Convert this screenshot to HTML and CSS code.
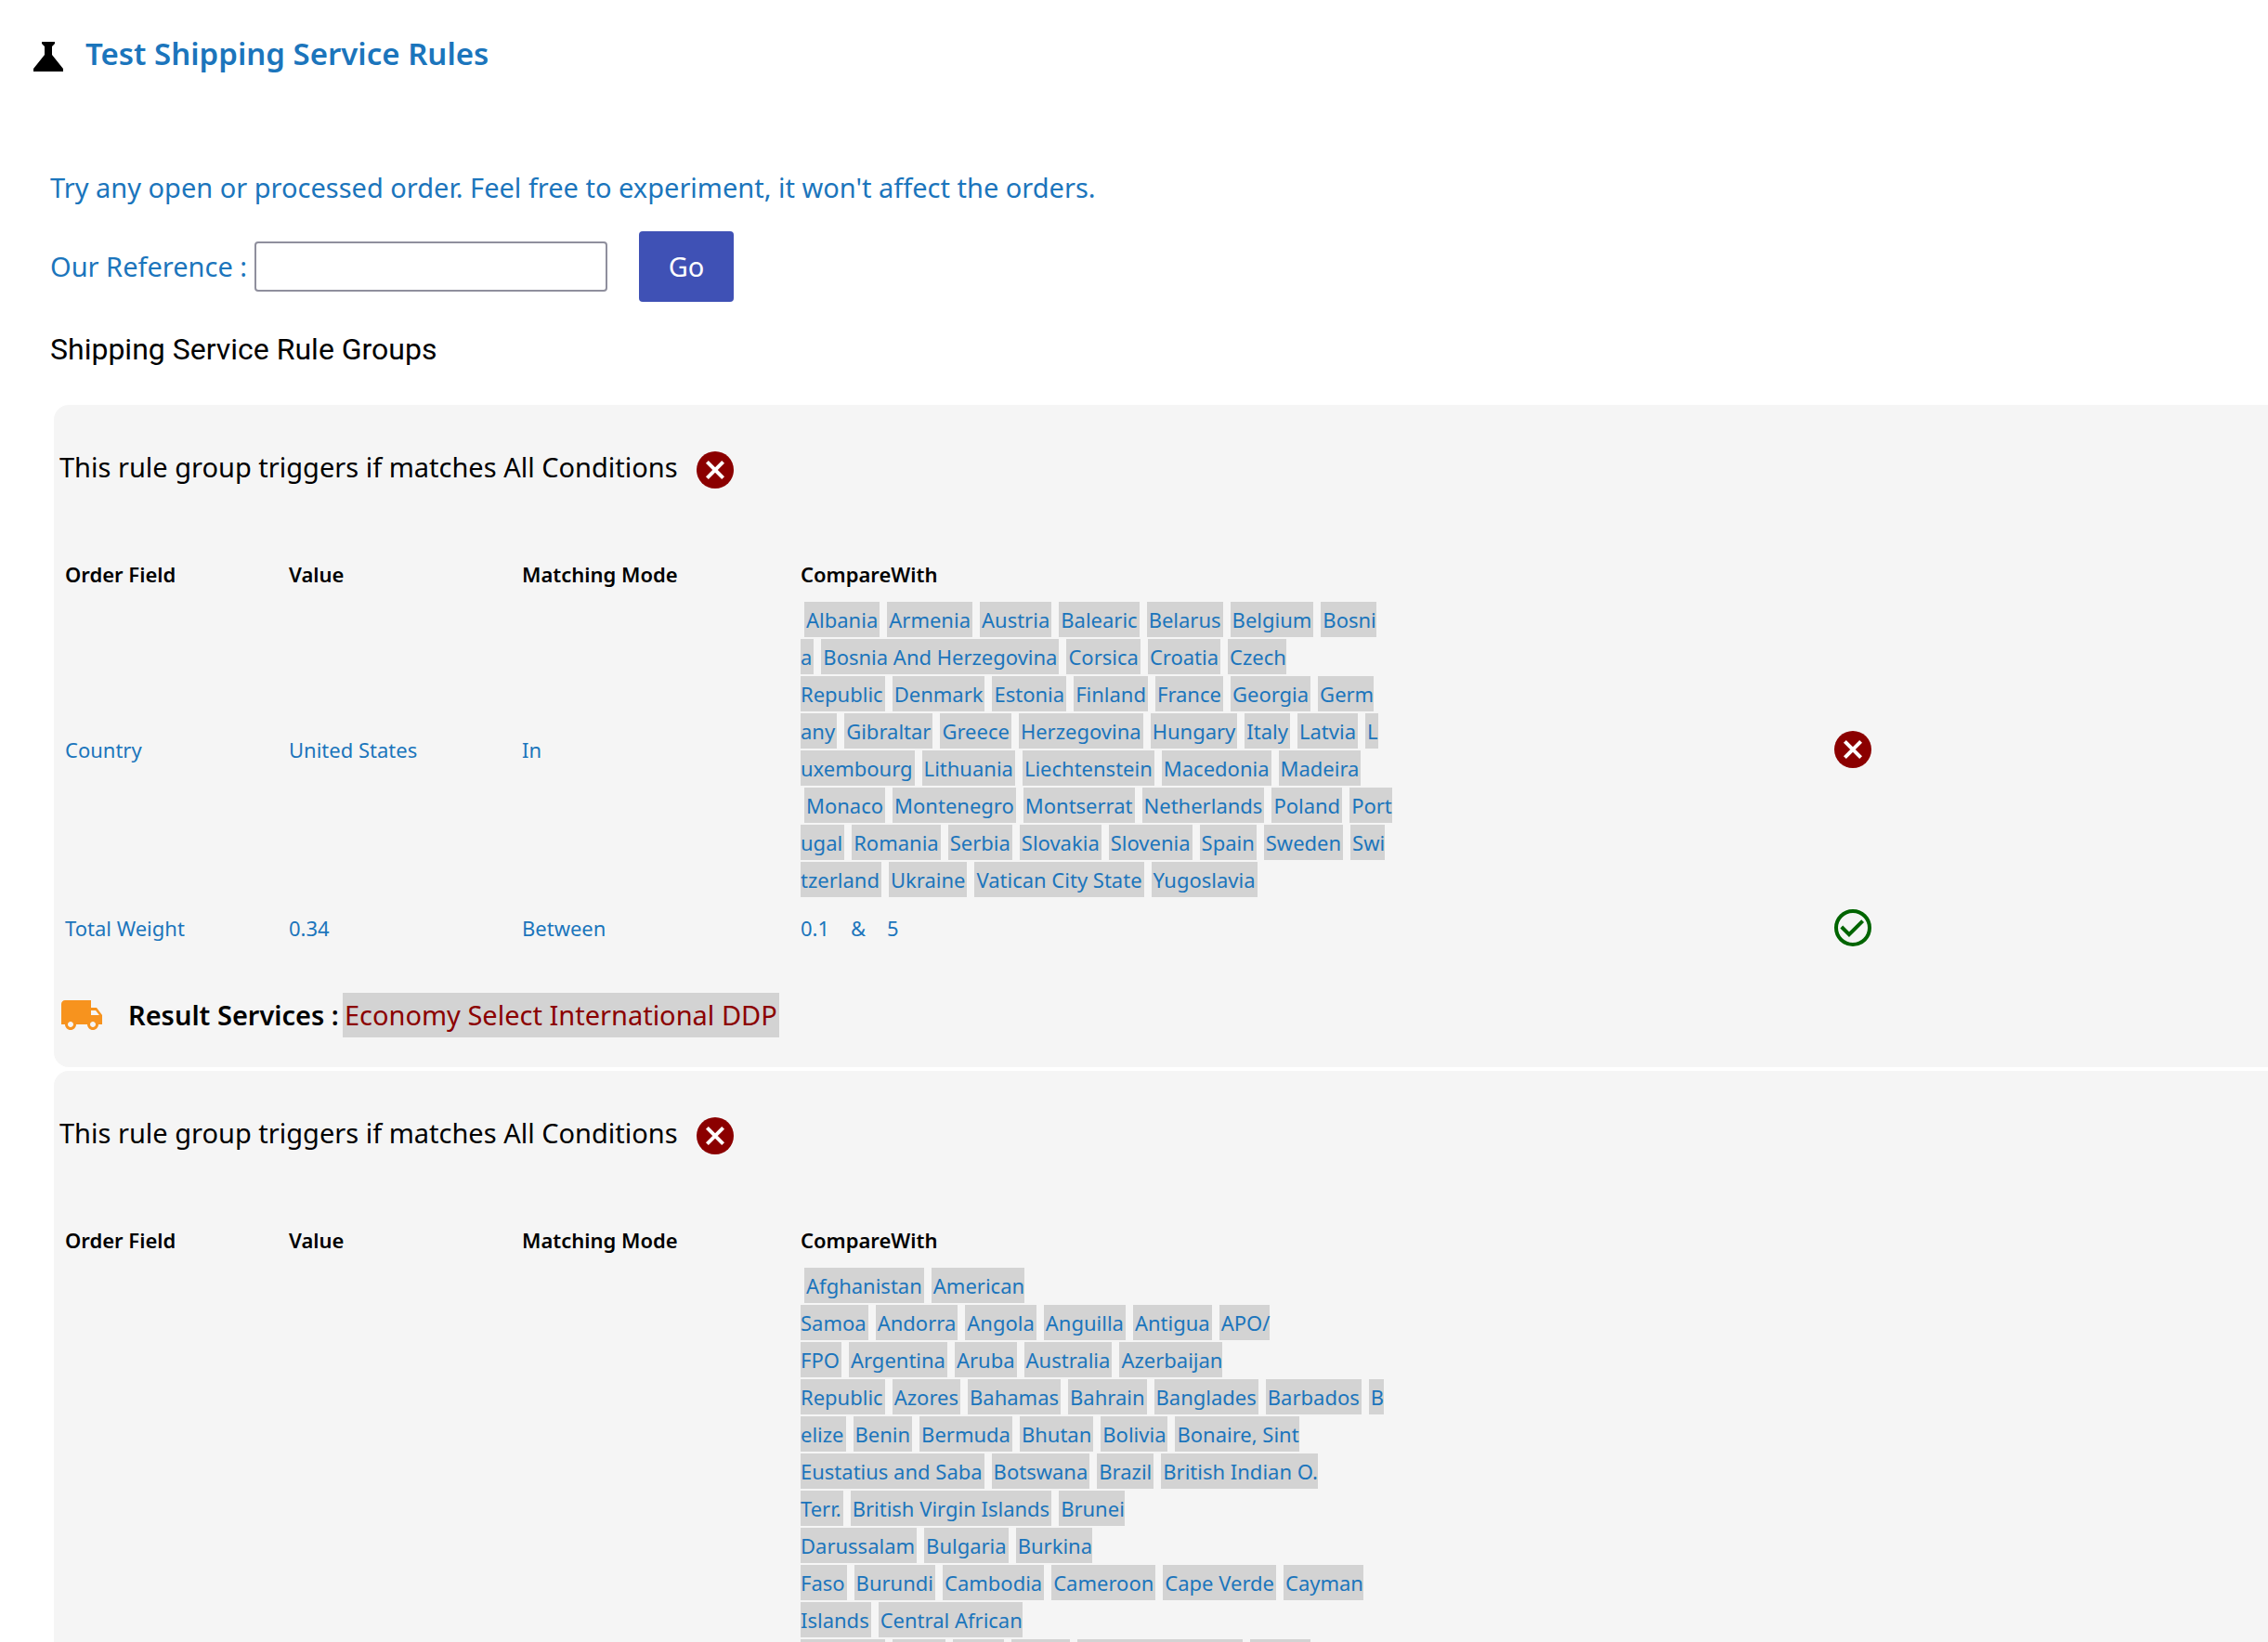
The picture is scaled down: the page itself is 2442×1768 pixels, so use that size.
FILE: index.html
```html
<!DOCTYPE html>
<html lang="en">
<head>
    <meta charset="UTF-8">
    <meta name="viewport" content="width=device-width, initial-scale=1.0">
    <title>Test Shipping Service Rules</title>
    <link rel="stylesheet" href="styles.css">
</head>
<body>

    <!-- Shared icons -->
    <svg class="sprite" aria-hidden="true">
        <symbol id="icon-cancel" viewBox="0 0 24 24">
            <circle cx="12" cy="12" r="10" fill="#8b0000"/>
            <path d="M7.700 7.700l8.600 8.600M16.300 7.700l-8.600 8.600" stroke="#fff" stroke-width="2"/>
        </symbol>
        <symbol id="icon-check" viewBox="0 0 24 24">
            <circle cx="12" cy="12" r="9" fill="none" stroke="#006400" stroke-width="2"/>
            <path d="M5.900 11.500l4.100 4.100 7.300-7.300" fill="none" stroke="#006400" stroke-width="2"/>
        </symbol>
        <symbol id="icon-truck" viewBox="0 0 24 24">
            <path fill="#f7931e" d="M20 8h-3V4H3c-1.100 0-2 .9-2 2v11h2c0 1.660 1.340 3 3 3s3-1.340 3-3h6c0 1.660 1.340 3 3 3s3-1.340 3-3h2v-5l-3-4zM6 18.500c-.83 0-1.500-.67-1.500-1.500s.67-1.500 1.500-1.500 1.500.67 1.500 1.500-.67 1.500-1.500 1.500zm13.500-9l1.960 2.500H17V9.500h2.500zm-1.500 9c-.83 0-1.500-.67-1.500-1.500s.67-1.500 1.500-1.500 1.500.67 1.500 1.500-.67 1.500-1.500 1.500z"/>
        </symbol>
    </svg>

    <header class="page-header">
        <svg class="flask" viewBox="0 0 32 32" aria-hidden="true">
            <path d="M9 0h14v2l-3 3v9l12 15v3H0v-3l12-15V5L9 2z"/>
        </svg>
        <h1>Test Shipping Service Rules</h1>
    </header>

    <main class="content">
        <p class="intro">Try any open or processed order. Feel free to experiment, it won't affect the orders.</p>

        <form class="search">
            <label for="reference">Our Reference :</label>
            <input type="text" id="reference">
            <button type="button">Go</button>
        </form>

        <h2>Shipping Service Rule Groups</h2>

        <section class="group">
            <div class="group-title">
                <span>This rule group triggers if matches All Conditions</span>
                <svg class="icon"><use href="#icon-cancel"/></svg>
            </div>
            <table class="rules">
                <colgroup>
                    <col class="col-field"><col class="col-value"><col class="col-mode"><col class="col-compare"><col>
                </colgroup>
                <thead>
                    <tr><th>Order Field</th><th>Value</th><th>Matching Mode</th><th>CompareWith</th><th></th></tr>
                </thead>
                <tbody>
                    <tr>
                        <td>Country</td>
                        <td>United States</td>
                        <td>In</td>
                        <td class="chips"><span>Albania</span><span>Armenia</span><span>Austria</span><span>Balearic</span><span>Belarus</span><span>Belgium</span><span>Bosni<br>a</span><span>Bosnia And Herzegovina</span><span>Corsica</span><span>Croatia</span><span>Czech<br>Republic</span><span>Denmark</span><span>Estonia</span><span>Finland</span><span>France</span><span>Georgia</span><span>Germ<br>any</span><span>Gibraltar</span><span>Greece</span><span>Herzegovina</span><span>Hungary</span><span>Italy</span><span>Latvia</span><span>L<br>uxembourg</span><span>Lithuania</span><span>Liechtenstein</span><span>Macedonia</span><span>Madeira</span><br><span>Monaco</span><span>Montenegro</span><span>Montserrat</span><span>Netherlands</span><span>Poland</span><span>Port<br>ugal</span><span>Romania</span><span>Serbia</span><span>Slovakia</span><span>Slovenia</span><span>Spain</span><span>Sweden</span><span>Swi<br>tzerland</span><span>Ukraine</span><span>Vatican City State</span><span>Yugoslavia</span></td>
                        <td><svg class="icon"><use href="#icon-cancel"/></svg></td>
                    </tr>
                    <tr>
                        <td>Total Weight</td>
                        <td>0.34</td>
                        <td>Between</td>
                        <td>0.1 &nbsp;&nbsp; &amp; &nbsp;&nbsp; 5</td>
                        <td><svg class="icon"><use href="#icon-check"/></svg></td>
                    </tr>
                </tbody>
            </table>
            <div class="result">
                <svg class="icon"><use href="#icon-truck"/></svg>
                <strong>Result Services :</strong>
                <span class="service">Economy Select International DDP</span>
            </div>
        </section>

        <section class="group">
            <div class="group-title">
                <span>This rule group triggers if matches All Conditions</span>
                <svg class="icon"><use href="#icon-cancel"/></svg>
            </div>
            <table class="rules">
                <colgroup>
                    <col class="col-field"><col class="col-value"><col class="col-mode"><col class="col-compare"><col>
                </colgroup>
                <thead>
                    <tr><th>Order Field</th><th>Value</th><th>Matching Mode</th><th>CompareWith</th><th></th></tr>
                </thead>
                <tbody>
                    <tr>
                        <td></td>
                        <td></td>
                        <td></td>
                        <td class="chips"><span>Afghanistan</span><span>American<br>Samoa</span><span>Andorra</span><span>Angola</span><span>Anguilla</span><span>Antigua</span><span>APO/<br>FPO</span><span>Argentina</span><span>Aruba</span><span>Australia</span><span>Azerbaijan<br>Republic</span><span>Azores</span><span>Bahamas</span><span>Bahrain</span><span>Banglades</span><span>Barbados</span><span>B<br>elize</span><span>Benin</span><span>Bermuda</span><span>Bhutan</span><span>Bolivia</span><span>Bonaire, Sint<br>Eustatius and Saba</span><span>Botswana</span><span>Brazil</span><span>British Indian O.<br>Terr.</span><span>British Virgin Islands</span><span>Brunei<br>Darussalam</span><span>Bulgaria</span><span>Burkina<br>Faso</span><span>Burundi</span><span>Cambodia</span><span>Cameroon</span><span>Cape Verde</span><span>Cayman<br>Islands</span><span>Central African<br>Republic</span><span>Chad</span><span>Chile</span><span>China</span><span>Christmas Island</span><span>Cocos</span></td>
                        <td></td>
                    </tr>
                </tbody>
            </table>
        </section>
    </main>

</body>
</html>
```
FILE: styles.css
```css
* {
    margin: 0;
    padding: 0;
    box-sizing: border-box;
}

body {
    background: #fff;
    color: #1b75bc;
    font-family: "Noto Sans", "Open Sans", sans-serif;
    font-size: 29px;
    line-height: 40px;
    overflow: hidden;
}

.sprite {
    position: absolute;
    width: 0;
    height: 0;
}

.icon {
    display: block;
    width: 48px;
    height: 48px;
    flex: none;
}

/* Header */
.page-header {
    display: flex;
    align-items: center;
    gap: 24px;
    height: 122px;
    padding-left: 36px;
}

.page-header h1 {
    padding-bottom: 6px;
    font-size: 33px;
    font-weight: 600;
}

.flask {
    width: 32px;
    height: 32px;
}

.content {
    padding: 60px 0 0 54px;
}

/* Search form */
.search {
    display: flex;
    align-items: center;
    height: 76px;
    margin-top: 27px;
}

.search input {
    width: 380px;
    height: 54px;
    margin: 0 34px 0 8px;
    padding: 0 8px;
    border: 2px solid #8f8f9d;
    border-radius: 4px;
    font: inherit;
}

.search button {
    width: 102px;
    height: 76px;
    border: none;
    border-radius: 4px;
    background: #3f51b5;
    color: #fff;
    font: inherit;
}

.content h2 {
    margin: 31px 0 40px;
    color: #000;
    font-family: Roboto, sans-serif;
    font-size: 32px;
    font-weight: 400;
}

/* Rule groups */
.group {
    margin: 0 0 4px 4px;
    padding: 46px 0 32px 6px;
    border-radius: 16px 0 0 16px;
    background: #f5f5f5;
}

.group-title {
    display: flex;
    align-items: center;
    gap: 16px;
    color: #000;
}

.group-title span {
    padding-bottom: 6px;
}

.rules {
    width: 100%;
    margin-top: 62px;
    border-collapse: collapse;
    table-layout: fixed;
    font-size: 22px;
}

.col-field {
    width: 241px;
}

.col-value {
    width: 251px;
}

.col-mode {
    width: 300px;
}

.col-compare {
    width: 1109px;
}

.rules th {
    height: 51px;
    padding: 0 6px;
    color: #000;
    font-weight: 600;
    text-align: left;
}

.rules td {
    padding: 4px 6px;
    vertical-align: middle;
}

.rules .chips {
    white-space: nowrap;
}

.chips span {
    margin: 0 4px;
    padding: 4px 2px;
    background: #d3d3d3;
}

/* Result line */
.result {
    display: flex;
    align-items: center;
    margin-top: 42px;
}

.result strong {
    margin: 0 4px 0 26px;
    color: #000;
    font-weight: 600;
}

.service {
    padding: 4px 2px;
    background: #d3d3d3;
    color: #8b0000;
}
```
